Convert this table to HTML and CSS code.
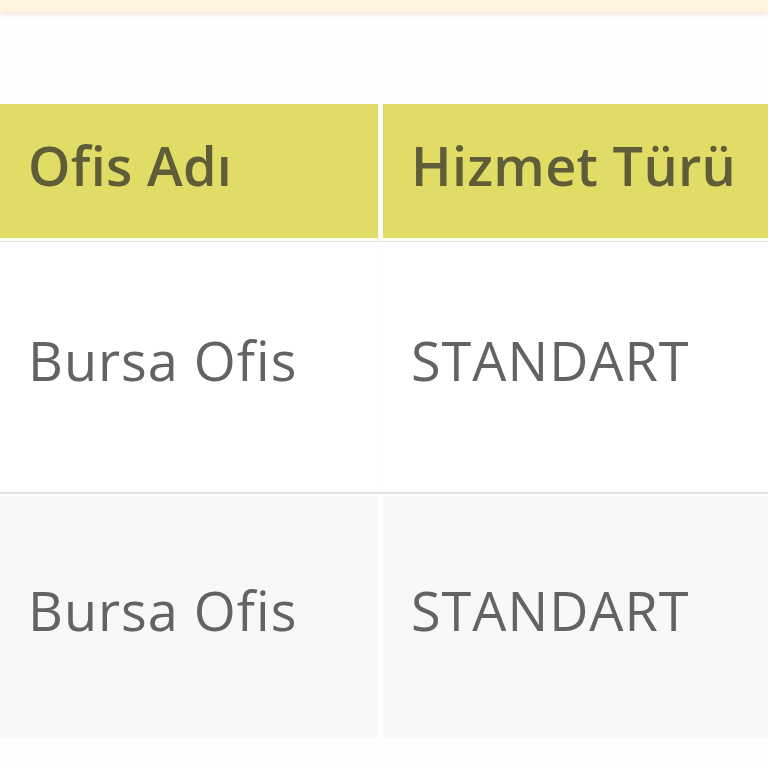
FILE: index.html
```html
<!DOCTYPE html>
<html lang="tr">
<head>
<meta charset="utf-8">
<link rel="stylesheet" href="styles.css">
</head>
<body>
<div class="topbar"></div>
<div class="table">
  <div class="row head">
    <div class="cell">Ofis Adı</div>
    <div class="cell">Hizmet Türü</div>
  </div>
  <div class="row body odd">
    <div class="cell">Bursa Ofis</div>
    <div class="cell">STANDART</div>
  </div>
  <div class="row body even">
    <div class="cell">Bursa Ofis</div>
    <div class="cell">STANDART</div>
  </div>
</div>
</body>
</html>
```
FILE: styles.css
```css
html, body {
  margin: 0;
  padding: 0;
  background: #fefefe;
  width: 768px;
  height: 768px;
  overflow: hidden;
  font-family: "Open Sans", "Noto Sans", sans-serif;
}
.topbar {
  height: 12px;
  background: #fff5e0;
  box-shadow: 0 2px 5px rgba(215, 175, 130, 0.35);
}
.table {
  margin-top: 92px;
}
.row {
  display: grid;
  grid-template-columns: 378px 1fr;
  column-gap: 5px;
}
.cell {
  display: flex;
  align-items: center;
  padding-left: 28px;
  white-space: nowrap;
}
.head {
  height: 134px;
  border-bottom: 3px solid #fdfdf5;
  box-shadow: 0 1px 0 #e6e6e0;
}
.head .cell {
  background: #e0dc65;
  color: #5e5d38;
  font-size: 54px;
  font-weight: 600;
  letter-spacing: 0.3px;
  padding-bottom: 12px;
}
.body .cell {
  color: #636363;
  font-size: 54px;
  font-weight: 400;
  letter-spacing: 1px;
}
.odd {
  height: 250px;
  margin-top: 1px;
  border-bottom: 2px solid #e2e2e2;
}
.odd .cell {
  background: #ffffff;
  padding-bottom: 14px;
}
.even {
  height: 242px;
  margin-top: 2px;
}
.even .cell {
  background: #f8f8f8;
  padding-bottom: 14px;
}
```
